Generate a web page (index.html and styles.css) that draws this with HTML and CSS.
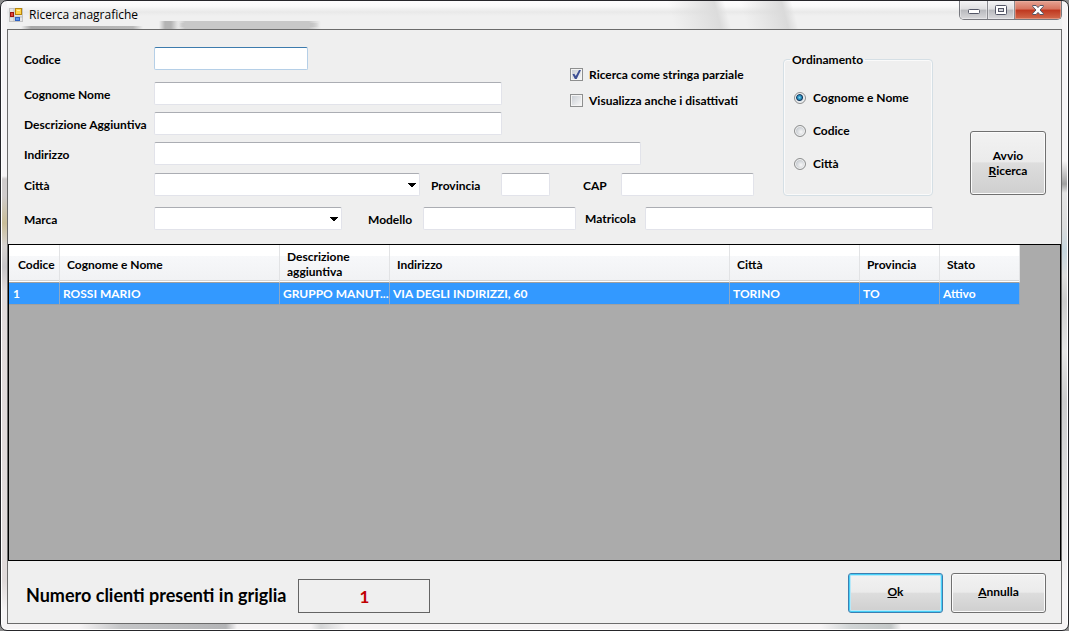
FILE: index.html
```html
<!DOCTYPE html>
<html lang="it">
<head>
<meta charset="utf-8">
<title>Ricerca anagrafiche</title>
<link rel="stylesheet" href="styles.css">
</head>
<body>
<div class="window">
  <header class="titlebar">
    <svg class="app-icon" viewBox="0 0 14 14" aria-hidden="true">
      <rect x="0.5" y="0.5" width="13" height="13" fill="#e4e4e4" stroke="#c4c4c4"/>
      <path d="M5 0v14M9 9v5M0 9h14" stroke="#bdbdbd" fill="none"/>
      <rect x="6.5" y="0.5" width="6" height="6" fill="#ffd34a" stroke="#b8860b"/>
      <path d="M8 2h3v1H8z" fill="#fff0a8"/>
      <rect x="1.5" y="4.5" width="3" height="4" fill="#e0463a" stroke="#9c1410"/>
      <rect x="6.5" y="9.5" width="4" height="3" fill="#5b93ea" stroke="#2f63c4"/>
    </svg>
    <h1 class="title">Ricerca anagrafiche</h1>
    <div class="caption-buttons">
      <button class="caption minimize" type="button" aria-label="Riduci a icona">
        <svg viewBox="0 0 12 10" width="12" height="10" aria-hidden="true"><rect x="0.5" y="4.5" width="11" height="4" rx="1" fill="#fff" stroke="#535666"/></svg>
      </button>
      <button class="caption maximize" type="button" aria-label="Ingrandisci">
        <svg viewBox="0 0 12 10" width="12" height="10" aria-hidden="true"><rect x="0.5" y="0.5" width="11" height="9" rx="1" fill="#fff" stroke="#535666"/><rect x="3.5" y="3.5" width="5" height="3" fill="#d4d5da" stroke="#535666"/></svg>
      </button>
      <button class="caption close" type="button" aria-label="Chiudi">
        <svg viewBox="0 0 12 10" width="12" height="10" aria-hidden="true"><path d="M0.7 0.5h3.4L6 2.6 7.9 0.5h3.4v1L8 5l3.3 3.5v1H7.9L6 7.4 4.1 9.5H0.7v-1L4 5 0.7 1.5z" fill="#fff" stroke="#535666"/></svg>
      </button>
    </div>
  </header>

  <main class="client">
    <form class="search">
      <div class="fields">
        <div class="upper">
          <div class="criteria">
            <div class="name-block">
              <div class="names">
                <div class="row row-code"><label class="lead" for="codice">Codice</label><input class="box code focused" id="codice" type="text"></div>
                <div class="row"><label class="lead" for="nome">Cognome Nome</label><input class="box name" id="nome" type="text"></div>
                <div class="row"><label class="lead" for="descr">Descrizione Aggiuntiva</label><input class="box name" id="descr" type="text"></div>
              </div>
              <div class="options">
                <label class="choice"><input class="check" type="checkbox" checked>Ricerca come stringa parziale</label>
                <label class="choice"><input class="check" type="checkbox">Visualizza anche i disattivati</label>
              </div>
            </div>
            <div class="row"><label class="lead" for="indirizzo">Indirizzo</label><input class="box address" id="indirizzo" type="text"></div>
            <div class="row row-city">
              <label class="lead" for="citta">Città</label><select class="box city" id="citta"><option></option></select>
              <label class="lab-prov" for="prov">Provincia</label><input class="box prov" id="prov" type="text">
              <label class="lab-cap" for="cap">CAP</label><input class="box cap" id="cap" type="text">
            </div>
          </div>
          <fieldset class="order">
            <legend>Ordinamento</legend>
            <label class="choice"><input class="radio" type="radio" name="ordine" checked>Cognome e Nome</label>
            <label class="choice"><input class="radio" type="radio" name="ordine">Codice</label>
            <label class="choice"><input class="radio" type="radio" name="ordine">Città</label>
          </fieldset>
        </div>
        <div class="row row-brand">
          <label class="lead" for="marca">Marca</label><select class="box brand" id="marca"><option></option></select>
          <label class="lab-model" for="modello">Modello</label><input class="box model" id="modello" type="text">
          <label class="lab-serial" for="matricola">Matricola</label><input class="box serial" id="matricola" type="text">
        </div>
      </div>
      <button class="push start" type="button">Avvio<br><u>R</u>icerca</button>
    </form>

    <div class="datagrid">
      <table class="results">
        <colgroup><col class="c-code"><col class="c-name"><col class="c-descr"><col class="c-addr"><col class="c-city"><col class="c-prov"><col class="c-state"></colgroup>
        <thead>
          <tr><th>Codice</th><th>Cognome e Nome</th><th>Descrizione aggiuntiva</th><th>Indirizzo</th><th>Città</th><th>Provincia</th><th>Stato</th></tr>
        </thead>
        <tbody>
          <tr><td>1</td><td>ROSSI MARIO</td><td>GRUPPO MANUT...</td><td>VIA DEGLI INDIRIZZI, 60</td><td>TORINO</td><td>TO</td><td>Attivo</td></tr>
        </tbody>
      </table>
    </div>

    <footer class="footer">
      <span class="count-label">Numero clienti presenti in griglia</span>
      <output class="count">1</output>
      <div class="actions">
        <button class="push default" type="button"><span><u>O</u>k</span></button>
        <button class="push" type="button"><span><u>A</u>nnulla</span></button>
      </div>
    </footer>
  </main>
</div>
</body>
</html>
```
FILE: styles.css
```css
* { box-sizing: border-box; }

body {
  margin: 0;
  background: #8c8c8c;
  color: #000;
  font: bold 12px/15px Lato, "Open Sans", sans-serif;
}

button, input, select { font: inherit; color: inherit; margin: 0; }

.window {
  display: flex;
  flex-direction: column;
  min-height: 100vh;
  padding: 0 6px 6px;
  border: 1px solid #26262a;
  border-radius: 7px;
  box-shadow: inset 0 0 0 1px #fff;
  background:
    linear-gradient(90deg, transparent 78px, #c4c5c7 120px, #b4b5b7 225px, transparent 236px, transparent 310px, #d4d5d6 320px, transparent 345px) 0 100% / 100% 6px no-repeat,
    linear-gradient(90deg, transparent 820px, #d0d4d5 850px, #c4c8c8 890px, transparent 900px) 0 100% / 100% 6px no-repeat,
    linear-gradient(transparent 175px, #d0cccc 178px, #d0cccc 195px, #c9bd98 222px, #d8d4d2 245px, #c8c6c8 266px, #e2dcdc 290px, #e0dada 580px, transparent 610px) 0 0 / 6px 100% no-repeat,
    linear-gradient(transparent 160px, #a0a0a0 183px, #e4e4e4 192px, #dcdcdc 225px, #c6d6de 250px, #dedede 275px, #cccccc 300px, #e6e6e6 350px, #cccccc 400px, #e2e2e2 500px, transparent 590px) 100% 0 / 6px 100% no-repeat,
    #f6f4f5;
}

.titlebar {
  display: flex;
  height: 28px;
  padding-left: 2px;
  background:
    linear-gradient(90deg, transparent 14px, #a8a8a8 24px, #b8b8b8 126px, transparent 136px) 0 100% / 100% 3px no-repeat,
    linear-gradient(90deg, transparent 152px, #b4b4b4 158px, #b4b4b4 164px, transparent 172px) 0 100% / 100% 8px no-repeat,
    linear-gradient(90deg, transparent 170px, #c8c8c8 178px, #c8c8c8 302px, transparent 314px) 0 100% / 100% 8px no-repeat,
    linear-gradient(90deg, transparent 172px, #a4a4a4 180px, #a4a4a4 300px, transparent 312px) 0 22px / 100% 4px no-repeat,
    linear-gradient(75deg, transparent 645px, #dcdcdc 690px, transparent 700px, transparent 715px, #dadada 755px, transparent 765px),
    linear-gradient(#fdfcfd, #fafafa 5px, #e9e9e9 11px, #f0f0f0 15px);
}

.app-icon { width: 14px; height: 14px; margin-top: 7px; }

.title {
  flex: 1;
  margin: 6px 0 0 6px;
  font: normal 12px/16px "Open Sans", sans-serif;
}

.caption-buttons {
  display: flex;
  height: 19px;
  border: 1px solid #77787e;
  border-top: 0;
  border-radius: 0 0 5px 5px;
  overflow: hidden;
}

.caption {
  display: flex;
  align-items: center;
  justify-content: center;
  width: 28px;
  padding: 0;
  border: 0;
  border-right: 1px solid #8a8b90;
  background: linear-gradient(#f4f4f5, #dedee0 45%, #b8b9bd 50%, #d8d8db);
  box-shadow: inset 0 0 0 1px #f4f4f580;
}

.maximize { width: 27px; }

.close {
  width: 46px;
  border-right: 0;
  background: linear-gradient(#e5a393, #d6745f 45%, #bf371f 50%, #d36a4c);
  box-shadow: inset 0 0 0 1px #f0b8a880;
}

.client {
  display: flex;
  flex: 1;
  flex-direction: column;
  border: 1px solid #6b6b6b;
  background: #efefef;
}

.search { display: flex; padding: 17px 15px 14px 16px; }
.fields { flex: 1; }
.upper { display: flex; }
.criteria { flex: 1; }
.name-block { display: flex; }
.options { display: flex; flex-direction: column; gap: 11px; padding: 20px 0 0 68px; }

.row { display: flex; align-items: center; margin-bottom: 7px; }
.row label { padding-top: 2px; }
.row-code { margin-bottom: 12px; }
.row-city { margin: 8px 0 0; }
.row-brand { margin: 11px 0 0; }
.lead { width: 130px; white-space: nowrap; }

.box {
  height: 23px;
  padding: 2px 4px;
  border: 1px solid #e2e3ea;
  border-top-color: #abadb3;
  border-radius: 2px;
  outline: 0;
  background: #fff;
}

.focused { border-color: #b5cfe7; border-top-color: #3d7bad; }

select.box {
  appearance: none;
  background-image:
    linear-gradient(to bottom left, #000 50%, transparent 50%),
    linear-gradient(to bottom right, #000 50%, transparent 50%);
  background-position: right 7px top 9px, right 3px top 9px;
  background-size: 4px 5px;
  background-repeat: no-repeat;
}

.code { width: 154px; }
.name { width: 348px; }
.address { width: 487px; }
.city { width: 266px; }
.lab-prov { width: 70px; margin-left: 11px; }
.prov { width: 49px; }
.lab-cap { width: 38px; margin-left: 33px; }
.cap { width: 133px; }
.brand { width: 188px; }
.lab-model { width: 55px; margin-left: 26px; }
.model { width: 153px; }
.row .lab-serial { width: 60px; margin-left: 9px; padding: 0; }
.serial { flex: 1; }

.choice { display: flex; align-items: center; gap: 6px; white-space: nowrap; }

.check {
  appearance: none;
  display: grid;
  place-items: center;
  width: 13px;
  height: 13px;
  padding: 1px;
  border: 1px solid #8e8f8f;
  background: linear-gradient(135deg, #cbcfd5, #f6f6f6) content-box, #f4f4f4;
}

.check:checked::before {
  content: "";
  width: 9px;
  height: 9px;
  background: #3d4f94;
  clip-path: polygon(5% 48%, 25% 42%, 42% 68%, 78% 0, 100% 0, 52% 100%, 32% 100%);
}

.radio {
  appearance: none;
  width: 12px;
  height: 12px;
  border: 1px solid #8e8f8f;
  border-radius: 50%;
  background: radial-gradient(circle at 60% 60%, #f8f8f8, #c9cdd2 5px);
  box-shadow: inset 0 0 0 1px #f4f4f4;
}

.radio:checked {
  background: radial-gradient(circle at 45% 45%, #7ed4f4 0, #2389b8 2px, #14375c 3px, #dfe5ea 4px);
}

.order {
  display: flex;
  flex-direction: column;
  gap: 18px;
  width: 150px;
  margin: 5px 0 0;
  padding: 23px 10px 20px;
  border: 1px solid #d5dfe5;
  border-radius: 4px;
  box-shadow: inset 0 0 0 1px #fafafa;
}

.order legend { margin-left: -4px; padding: 0 2px; }
.order .choice { gap: 7px; }

.push {
  width: 95px;
  height: 40px;
  padding: 0;
  border: 1px solid #707070;
  border-radius: 3px;
  background: linear-gradient(#f2f2f2, #ebebeb 48%, #dddddd 50%, #cfcfcf);
  box-shadow: inset 0 0 0 1px #fbfbfb;
}

.start { width: 76px; height: 64px; margin: 84px 0 0 37px; }
.default { border-color: #3c7fb1; box-shadow: inset 0 0 0 1px #46d0f8, inset 0 0 0 2px #b8e8f8; }

.datagrid {
  flex: 1;
  border: 1px solid #000;
  background: #ababab;
}

.results {
  width: 1011px;
  table-layout: fixed;
  border-collapse: separate;
  border-spacing: 0;
}

.c-code { width: 51px; }
.c-name { width: 220px; }
.c-descr { width: 110px; }
.c-addr { width: 340px; }
.c-city { width: 130px; }
.c-prov { width: 80px; }

.results th {
  height: 38px;
  padding: 1px 7px 0;
  border-right: 1px solid #e2e3e5;
  border-bottom: 1px solid #a0a0a0;
  background: linear-gradient(#fff 11px, #f7f8fa 11px, #f1f2f4 35px, #d5d5d5 35px, #d5d5d5 36px, #fff 36px);
  text-align: left;
}

.results th:first-child { padding: 1px 0 0 9px; }

.results td {
  height: 22px;
  padding: 0 0 0 3px;
  border-right: 1px solid #8fa8c4;
  border-bottom: 1px solid #a0a0a0;
  background: #39f;
  color: #fff;
  white-space: nowrap;
}

.results td:first-child { padding-left: 4px; }

.footer { display: flex; align-items: center; padding: 11px 15px 10px 18px; }
.count-label { padding-top: 4px; font-size: 18px; line-height: 22px; }

.count {
  width: 132px;
  height: 34px;
  margin: 7px 0 0 12px;
  border: 1px solid #646464;
  color: #c00000;
  font-size: 17px;
  line-height: 34px;
  text-align: center;
}

.actions { display: flex; gap: 8px; margin-left: auto; }
.actions .push { padding-bottom: 2px; }
```
